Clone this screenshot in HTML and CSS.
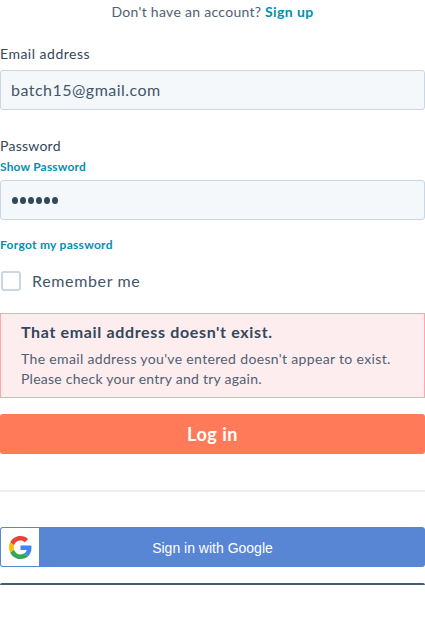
FILE: index.html
```html
<!DOCTYPE html>
<html lang="en">
<head>
<meta charset="utf-8">
<title>Log in</title>
<link rel="stylesheet" href="styles.css">
</head>
<body>
<main class="login">
  <p class="signup"><span class="signup-text">Don't have an account?</span> <a class="signup-link" href="#">Sign up</a></p>
  <form class="form">
    <label class="label" for="email">Email address</label>
    <input class="input email" id="email" type="text" value="batch15@gmail.com">
    <label class="label password-label">Password</label>
    <a class="link show" href="#">Show Password</a>
    <div class="input password"><i></i><i></i><i></i><i></i><i></i><i></i></div>
    <a class="link forgot" href="#">Forgot my password</a>
    <div class="remember"><span class="box"></span><span class="remember-text">Remember me</span></div>
    <section class="alert">
      <h2 class="alert-title">That email address doesn't exist.</h2>
      <p class="alert-text"><span class="alert-line">The email address you've entered doesn't appear to exist.</span><br>Please check your entry and try again.</p>
    </section>
    <button class="submit" type="button">Log in</button>
  </form>
  <hr class="divider">
  <button class="google" type="button">
    <span class="google-logo">
      <svg width="23" height="23" viewBox="0 0 48 48">
        <path fill="#EA4335" d="M24 9.5c3.54 0 6.71 1.22 9.21 3.6l6.85-6.85C35.9 2.38 30.47 0 24 0 14.62 0 6.51 5.38 2.56 13.22l7.98 6.19C12.43 13.72 17.74 9.5 24 9.5z"/>
        <path fill="#4285F4" d="M46.98 24.55c0-1.57-.15-3.09-.38-4.55H24v9.02h12.94c-.58 2.96-2.26 5.48-4.78 7.18l7.73 6c4.51-4.18 7.09-10.36 7.09-17.65z"/>
        <path fill="#FBBC05" d="M10.53 28.59c-.48-1.45-.76-2.99-.76-4.59s.27-3.14.76-4.59l-7.98-6.19C.92 16.46 0 20.12 0 24c0 3.88.92 7.54 2.56 10.78l7.97-6.19z"/>
        <path fill="#34A853" d="M24 48c6.48 0 11.93-2.13 15.89-5.81l-7.73-6c-2.15 1.45-4.92 2.3-8.16 2.3-6.26 0-11.57-4.22-13.47-9.91l-7.98 6.19C6.51 42.62 14.62 48 24 48z"/>
      </svg>
    </span>
    <span class="google-text">Sign in with Google</span>
  </button>
  <div class="next-button"></div>
</main>
</body>
</html>
```
FILE: styles.css
```css
* { box-sizing: border-box; }
body {
  margin: 0;
  background: #fff;
  color: #33475b;
  font-family: Lato, "Liberation Sans", sans-serif;
  overflow: hidden;
}
.login, .form { display: flex; flex-direction: column; }
.signup { margin: 0; height: 43px; font-size: 14px; line-height: 24px; text-align: center; white-space: nowrap; }
.signup-text { letter-spacing: .3px; color: #506172; }
a { color: #0091ae; text-decoration: none; }
.signup-link { font-weight: 700; letter-spacing: .4px; }
.label { height: 27px; font-size: 14px; line-height: 21px; letter-spacing: .5px; }
.input {
  width: 100%;
  height: 40px;
  padding: 0 10px;
  border: 1px solid #cbd6e2;
  border-radius: 3px;
  background: #f5f8fa;
  color: #43566a;
  font: 16px Lato, sans-serif;
  letter-spacing: .48px;
  outline: none;
}
.email { padding-bottom: 2px; }
.password-label { margin-top: 25px; height: 22px; letter-spacing: .25px; }
.link { font-size: 12px; font-weight: 700; }
.show { height: 23px; line-height: 20px; letter-spacing: .17px; }
.password { display: flex; align-items: center; gap: 2px; padding-left: 11px; }
.password i { width: 6px; height: 7px; border-radius: 50%; background: #33475b; }
.forgot { margin-top: 16px; height: 18px; line-height: 18px; letter-spacing: .28px; }
.remember { display: flex; align-items: center; gap: 11px; height: 20px; margin-top: 17px; padding-left: 1px; font-size: 16px; letter-spacing: .65px; color: #43566a; }
.remember-text { padding-bottom: 2px; }
.box { width: 20px; height: 20px; border: 2px solid #cbd6e2; border-radius: 3px; }
.alert { height: 85px; margin-top: 22px; padding: 7px 20px; border: 1px solid #f8a9ad; background: #fdedee; }
.alert-title { margin: 0; font-size: 16px; line-height: 22px; font-weight: 700; letter-spacing: .65px; }
.alert-text { margin: 6px 0 0; font-size: 14px; line-height: 20px; color: #506172; letter-spacing: .25px; white-space: nowrap; }
.alert-line { letter-spacing: .34px; }
.submit { height: 40px; margin-top: 16px; padding: 0; border: 0; border-radius: 3px; background: #ff7a59; color: #fff; font: 700 18px/40px Lato, sans-serif; letter-spacing: .5px; }
.divider { width: 100%; height: 2px; margin: 36px 0 35px; border: 0; background: #eee; }
.google { display: flex; align-items: center; height: 40px; padding: 1px; border: 0; border-radius: 3px; background: #5886d5; color: #fff; font: 14px "Liberation Sans", sans-serif; }
.google-logo { display: flex; align-items: center; justify-content: center; width: 38px; height: 38px; border-radius: 2px 0 0 2px; background: #fff; }
.google-text { flex: 1; padding: 1px 39px 0 1px; text-align: center; }
.next-button { height: 2px; margin-top: 16px; border-radius: 3px 3px 0 0; background: #425b76; }
```
